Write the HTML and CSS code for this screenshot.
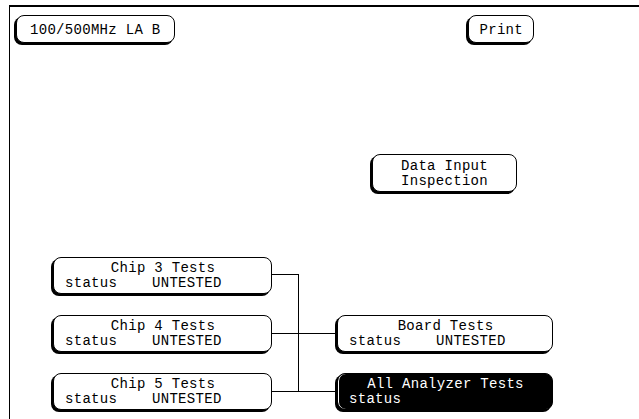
FILE: index.html
```html
<!DOCTYPE html>
<html lang="en">
<head>
    <meta charset="UTF-8">
    <meta name="viewport" content="width=device-width, initial-scale=1.0">
    <title>Self-Test</title>
    <link rel="stylesheet" href="styles.css">
</head>

<body>
    <div class="screen">
        <!-- top row: module name and print -->
        <div class="topbar">
            <div class="key">100/500MHz LA B</div>
            <div class="key small">Print</div>
        </div>

        <div class="inspect-row">
            <div class="key two-line">
                <span class="title">Data Input</span>
                <span class="title">Inspection</span>
            </div>
        </div>

        <!-- test tree -->
        <div class="tree">
            <div class="key test">
                <span class="title">Chip 3 Tests</span>
                <span class="status">status    UNTESTED</span>
            </div>
            <svg class="wires" width="65" height="153" viewBox="0 0 65 153">
                <path d="M0 17.5H26.5M26.5 17V135M0 76.5H65M0 134.5H65" stroke="#000" stroke-width="1" fill="none" shape-rendering="crispEdges"/>
            </svg>
            <div class="empty"></div>

            <div class="key test">
                <span class="title">Chip 4 Tests</span>
                <span class="status">status    UNTESTED</span>
            </div>
            <div class="key test">
                <span class="title">Board Tests</span>
                <span class="status">status    UNTESTED</span>
            </div>

            <div class="key test">
                <span class="title">Chip 5 Tests</span>
                <span class="status">status    UNTESTED</span>
            </div>
            <div class="key test active">
                <span class="title">All Analyzer Tests</span>
                <span class="status">status</span>
            </div>
        </div>
    </div>
</body>

</html>
```

FILE: styles.css
```css
* {
    margin: 0;
    padding: 0;
    box-sizing: border-box;
}

body {
    background-color: #fff;
    color: #000;
    font-family: "Liberation Mono", "DejaVu Sans Mono", monospace;
    font-size: 14px;
    line-height: 15px;
    letter-spacing: 0.3px;
}

.screen {
    margin: 5px 0 0 9px;
    min-height: calc(100vh - 5px);
    border-top: 2px solid #000;
    border-left: 1px solid #000;
}

.topbar {
    display: flex;
    justify-content: space-between;
    padding: 8px 105px 0 6px;
}

/* softkey look: rounded outline with a shadow on the left and bottom */
.key {
    border: 1px solid #000;
    border-radius: 8px;
    box-shadow: -2px 2px 0 #000;
    background-color: #fff;
    padding: 7px 13px 4px 13px;
    white-space: pre;
}

.key.small {
    padding: 7px 10px 4px 10px;
}

.inspect-row {
    display: flex;
    padding-left: 362px;
    margin-top: 111px;
}

.two-line {
    display: flex;
    flex-direction: column;
    align-items: center;
    width: 145px;
    height: 38px;
    padding: 4px 0 0 0;
}

.tree {
    display: grid;
    grid-template-columns: 219px 65px 216px;
    grid-template-rows: 37px 37px 37px;
    row-gap: 21px;
    margin: 65px 0 0 43px;
}

.wires {
    display: block;
    grid-column: 2;
    grid-row: 1 / span 3;
}

.test {
    display: flex;
    flex-direction: column;
    height: 37px;
    padding: 3px 10px 0 11px;
}

.test .title {
    text-align: center;
}

.active {
    background-color: #000;
    color: #fff;
    box-shadow: -2px 2px 0 #000, inset 1px 0 0 #fff;
}
```
